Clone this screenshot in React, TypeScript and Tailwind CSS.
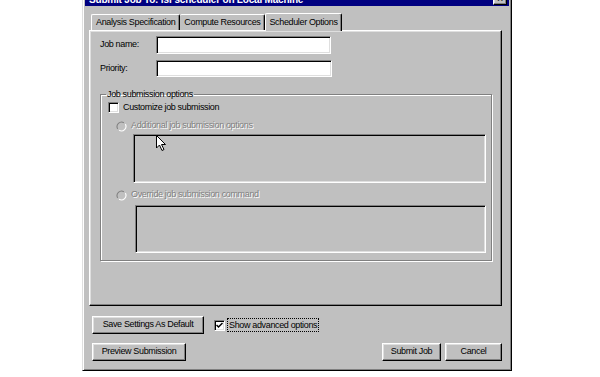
import React from 'react';

const font = { fontFamily: '"Liberation Sans", Arial, sans-serif' };

const raised =
  'border border-t-white border-l-white border-r-black border-b-black shadow-[inset_-1px_-1px_0_#808080,inset_1px_1px_0_#dfdfdf]';
const sunken =
  'border border-t-[#808080] border-l-[#808080] border-r-white border-b-white shadow-[inset_1px_1px_0_#000,inset_-1px_-1px_0_#dfdfdf]';

function Button({ label, w }: { label: string; w: string }) {
  return (
    <div className={`${raised} ${w} h-[18px] bg-[#c0c0c0] flex items-center justify-center text-black whitespace-nowrap`}>
      {label}
    </div>
  );
}

function Radio() {
  return (
    <svg width="11" height="11" viewBox="0 0 12 12" className="shrink-0">
      <circle cx="6" cy="6" r="5.5" fill="#c0c0c0" />
      <path d="M1.8 8.6 A5 5 0 0 1 8.6 1.8" stroke="#808080" strokeWidth="1.2" fill="none" />
      <path d="M3.4 10.2 A5 5 0 0 0 10.2 3.4" stroke="#ffffff" strokeWidth="1.2" fill="none" />
      <circle cx="6" cy="6" r="3.3" fill="#c0c0c0" />
    </svg>
  );
}

export default function App() {
  return (
    <div className="w-[600px] h-[377px] bg-white overflow-hidden text-[9px] tracking-[-0.35px] text-black" style={font}>
      {/* Dialog window */}
      <div className="ml-[82px] mt-[-13px] w-[430px] h-[384px] bg-[#c0c0c0] border border-t-[#dfdfdf] border-l-[#dfdfdf] border-r-black border-b-black shadow-[inset_1px_1px_0_#fff,inset_-1px_-1px_0_#808080] p-[2px] flex flex-col">
        {/* Title bar */}
        <div className="h-[16px] bg-[#000080] flex items-end justify-between pl-[4px] pr-[2px] pb-[1px]">
          <span className="text-white font-bold leading-none text-[10px] tracking-[-0.2px]">
            Submit Job To: lsf scheduler on Local Machine
          </span>
          <div className={`${raised} w-[14px] h-[12px] bg-[#c0c0c0] flex items-center justify-center text-[10px] font-bold leading-none`}>
            ×
          </div>
        </div>

        {/* Tabs */}
        <div className="ml-[4px] mr-[7px] mt-[6px] flex flex-col">
          <div className="flex items-end h-[18px] pl-[2px]">
            <div className="h-[16px] px-[4px] flex items-center border border-b-0 border-t-white border-l-white border-r-black rounded-t-[2px] shadow-[inset_-1px_0_0_#808080]">
              Analysis Specification
            </div>
            <div className="h-[16px] px-[4px] flex items-center border border-b-0 border-l-0 border-t-white border-r-black rounded-t-[2px] shadow-[inset_-1px_0_0_#808080]">
              Compute Resources
            </div>
            <div className="h-[18px] px-[3px] flex items-center border border-b-0 border-t-white border-l-white border-r-black rounded-t-[2px] shadow-[inset_-1px_0_0_#808080] -mb-[1px] bg-[#c0c0c0] relative z-10">
              Scheduler Options
            </div>
          </div>

          {/* Tab panel */}
          <div className="h-[276px] border border-t-white border-l-white border-r-black border-b-black shadow-[inset_-1px_-1px_0_#808080,inset_1px_1px_0_#dfdfdf] pl-[10px] pr-[10px] pt-[5px]">
            <div className="flex items-center h-[18px]">
              <span className="w-[56px]">Job name:</span>
              <div className={`${sunken} w-[175px] h-[18px] bg-white`} />
            </div>
            <div className="flex items-center h-[17px] mt-[6px]">
              <span className="w-[56px]">Priority:</span>
              <div className={`${sunken} w-[176px] h-[17px] bg-white`} />
            </div>

            {/* Group box */}
            <fieldset className="mt-[11px] w-[392px] h-[173px] border border-[#808080] shadow-[1px_1px_0_#fff,inset_1px_1px_0_#fff] pl-[7px] pr-[5px] relative">
              <legend className="px-[1px] ml-[-2px] leading-[12px]">Job submission options</legend>
              <div className="flex items-center gap-[4px] h-[13px] mt-[1px]">
                <div className={`${sunken} w-[11px] h-[11px] bg-white`} />
                <span>Customize job submission</span>
              </div>

              <div className="flex items-center gap-[4px] ml-[8px] mt-[6px] h-[12px] text-[#808080] [text-shadow:1px_1px_0_#fff]">
                <Radio />
                <span>Additional job submission options</span>
              </div>
              <div className={`${sunken} ml-[25px] mt-[2px] w-[353px] h-[49px] bg-[#c0c0c0]`} />

              <div className="flex items-center gap-[4px] ml-[8px] mt-[6px] h-[12px] text-[#808080] [text-shadow:1px_1px_0_#fff]">
                <Radio />
                <span>Override job submission command</span>
              </div>
              <div className={`${sunken} ml-[27px] mt-[4px] w-[351px] h-[48px] bg-[#c0c0c0]`} />

              {/* mouse cursor */}
              <svg width="12" height="18" viewBox="0 0 12 18" className="absolute left-[55px] top-[35px]">
                <path d="M0.5 0.5 L0.5 13 L3.5 10 L6 15.5 L8 14.5 L5.5 9.5 L9.5 9.5 Z" fill="#fff" stroke="#000" strokeWidth="1" />
              </svg>
            </fieldset>
          </div>
        </div>

        {/* Bottom buttons */}
        <div className="ml-[7px] mr-[7px] mt-[10px] flex items-center h-[18px]">
          <Button label="Save Settings As Default" w="w-[112px]" />
          <div className={`${sunken} ml-[10px] w-[11px] h-[11px] bg-white flex items-center justify-center`}>
            <svg width="7" height="7" viewBox="0 0 7 7">
              <path d="M0.5 3 L2.5 5 L6.5 1" stroke="#000" strokeWidth="1.5" fill="none" />
            </svg>
          </div>
          <span className="ml-[3px] px-[1px] outline outline-1 outline-dotted outline-black leading-[12px]">
            Show advanced options
          </span>
        </div>
        <div className="ml-[7px] mr-[7px] mt-[9px] flex items-center h-[18px]">
          <Button label="Preview Submission" w="w-[94px]" />
          <div className="flex-1" />
          <Button label="Submit Job" w="w-[59px]" />
          <div className="ml-[4px]">
            <Button label="Cancel" w="w-[57px]" />
          </div>
        </div>
      </div>
    </div>
  );
}
